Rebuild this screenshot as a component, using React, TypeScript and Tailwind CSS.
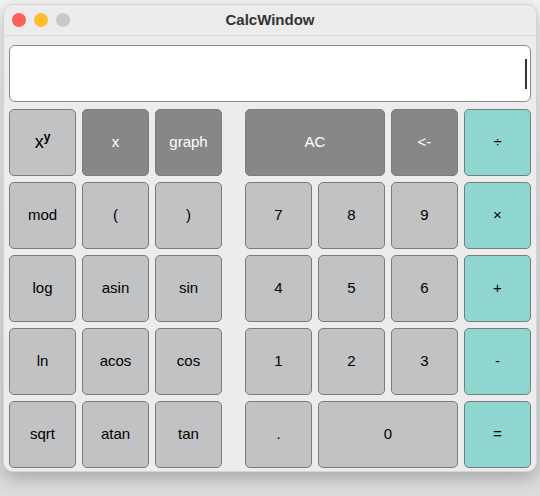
import React from 'react'

type Key = { label: React.ReactNode; kind: 'light' | 'dark' | 'op'; span?: number }

const leftKeys: Key[] = [
  { label: <span className="text-[18px]">x<sup className="text-[12px] -top-[7px] relative align-baseline font-bold">y</sup></span>, kind: 'light' },
  { label: 'x', kind: 'dark' },
  { label: 'graph', kind: 'dark' },
  { label: 'mod', kind: 'light' },
  { label: '(', kind: 'light' },
  { label: ')', kind: 'light' },
  { label: 'log', kind: 'light' },
  { label: 'asin', kind: 'light' },
  { label: 'sin', kind: 'light' },
  { label: 'ln', kind: 'light' },
  { label: 'acos', kind: 'light' },
  { label: 'cos', kind: 'light' },
  { label: 'sqrt', kind: 'light' },
  { label: 'atan', kind: 'light' },
  { label: 'tan', kind: 'light' },
]

const rightKeys: Key[] = [
  { label: 'AC', kind: 'dark', span: 2 },
  { label: '<-', kind: 'dark' },
  { label: '÷', kind: 'op' },
  { label: '7', kind: 'light' },
  { label: '8', kind: 'light' },
  { label: '9', kind: 'light' },
  { label: '×', kind: 'op' },
  { label: '4', kind: 'light' },
  { label: '5', kind: 'light' },
  { label: '6', kind: 'light' },
  { label: '+', kind: 'op' },
  { label: '1', kind: 'light' },
  { label: '2', kind: 'light' },
  { label: '3', kind: 'light' },
  { label: '-', kind: 'op' },
  { label: '.', kind: 'light' },
  { label: '0', kind: 'light', span: 2 },
  { label: '=', kind: 'op' },
]

function CalcKey({ k }: { k: Key }) {
  const color =
    k.kind === 'dark'
      ? 'bg-[#878787] text-white'
      : k.kind === 'op'
        ? 'bg-[#8fd6d0] text-black'
        : 'bg-[#c0c2c4] text-black'
  return (
    <button
      className={`${color} ${k.span === 2 ? 'col-span-2' : ''} h-[67px] rounded-[5px] border border-[#7b7b7b] flex items-center justify-center text-[15px]`}
    >
      {k.label}
    </button>
  )
}

function App() {
  return (
    <div
      className="w-[540px] h-[496px] bg-gradient-to-b from-[#f4f4f4] to-[#dcdcdc] pt-[4px] pl-[3px]"
      style={{ fontFamily: '"Liberation Sans", Arial, sans-serif' }}
    >
      <div className="w-[534px] h-[468px] rounded-[10px] bg-[#ececec] border border-[#d4d4d4] shadow-[0_6px_18px_rgba(0,0,0,0.25)] overflow-hidden flex flex-col">
        {/* title bar */}
        <div className="h-[31px] relative flex items-center justify-center border-b border-[#dadada] shrink-0">
          <div className="absolute left-[8px] top-[8px] flex gap-[8px]">
            <span className="w-[14px] h-[14px] rounded-full bg-[#fe5f57]" />
            <span className="w-[14px] h-[14px] rounded-full bg-[#febc2e]" />
            <span className="w-[14px] h-[14px] rounded-full bg-[#c9c9c9]" />
          </div>
          <span className="text-[15px] font-bold text-[#333]">CalcWindow</span>
        </div>

        <div className="px-[5px] pt-[9px]">
          {/* display */}
          <div className="h-[57px] rounded-[6px] border border-[#8a8a8a] bg-white flex items-center justify-end pr-[3px]">
            <span className="w-[2px] h-[30px] bg-[#333]" />
          </div>

          <div className="flex mt-[7px]">
            <div className="grid grid-cols-[repeat(3,67px)] gap-[6px]">
              {leftKeys.map((k, i) => (
                <CalcKey key={i} k={k} />
              ))}
            </div>
            <div className="grid grid-cols-[repeat(4,67px)] gap-[6px] ml-[23px]">
              {rightKeys.map((k, i) => (
                <CalcKey key={i} k={k} />
              ))}
            </div>
          </div>
        </div>
      </div>
    </div>
  )
}

export default App
